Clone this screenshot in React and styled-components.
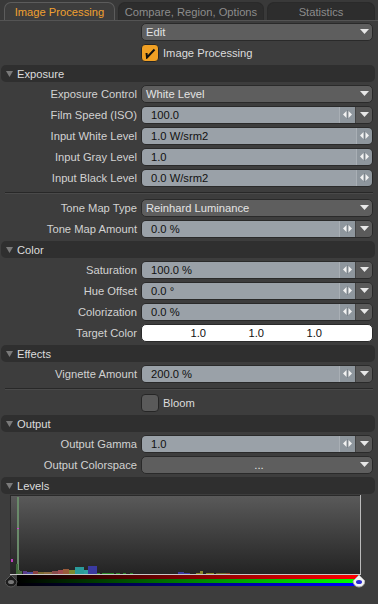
import React from 'react';
import styled, { createGlobalStyle } from 'styled-components';

const Global = createGlobalStyle`
  html, body {
    margin: 0;
    padding: 0;
    background: #3d3d3d;
  }
  body {
    font-family: "Liberation Sans", Arial, sans-serif;
    font-size: 11px;
    color: #d4d4d4;
  }
`;

const Panel = styled.div`
  width: 378px;
  height: 604px;
  overflow: hidden;
  background: #3d3d3d;
`;

const TabBar = styled.div`
  display: flex;
  align-items: flex-end;
  height: 20px;
  padding: 0 3px 0 4px;
  gap: 3px;
  border-bottom: 1px solid #545454;
  background: #393939;
`;

const Tab = styled.div`
  flex: ${(p) => p.$grow};
  height: 17px;
  display: flex;
  align-items: center;
  justify-content: center;
  border-radius: 7px 7px 0 0;
  font-size: 11.2px;
  color: ${(p) => (p.$active ? '#f0a030' : '#8c8c8c')};
  background: ${(p) => (p.$active ? '#3d3d3d' : '#2d2d2d')};
  border: 1px solid ${(p) => (p.$active ? '#5c5c5c' : '#2a2a2a')};
  border-bottom: none;
`;

const Row = styled.div`
  display: flex;
  align-items: center;
  height: 21px;
  padding-right: 5px;
`;

const Label = styled.div`
  width: 137px;
  flex: none;
  padding-right: 4px;
  box-sizing: content-box;
  text-align: right;
  white-space: nowrap;
  color: #d2d2d2;
  font-size: 11.2px;
`;

const Header = styled.div`
  height: 20px;
  display: flex;
  align-items: flex-start;
  padding: 2px 3px 0 1px;
  box-sizing: border-box;
`;

const HeaderBar = styled.div`
  flex: 1;
  height: 17px;
  display: flex;
  align-items: center;
  gap: 4px;
  padding-left: 5px;
  border-radius: 5px;
  background: #2f2f2f;
  color: #dcdcdc;
  font-size: 11.2px;
`;

const Separator = styled.div`
  height: ${(p) => p.$h}px;
  display: flex;
  align-items: center;
  padding: 0 5px;
  &::after {
    content: '';
    flex: 1;
    height: 1px;
    background: #282828;
    box-shadow: 0 1px 0 #4a4a4a;
  }
`;

const Dropdown = styled.div`
  flex: 1;
  height: 16px;
  display: flex;
  align-items: center;
  justify-content: ${(p) => (p.$center ? 'center' : 'space-between')};
  position: relative;
  padding-left: 4px;
  border: 1px solid #2a2a2a;
  border-radius: 5px;
  background: #5e5e5e;
  color: #e4e4e4;
  font-size: 11.2px;
`;

const DropArrow = styled.span`
  display: flex;
  align-items: center;
  justify-content: center;
  width: 16px;
  height: 100%;
  ${(p) => p.$float && 'position: absolute; right: 0; top: 0;'}
`;

const NumField = styled.div`
  flex: 1;
  height: 16px;
  display: flex;
  border: 1px solid #2a2a2a;
  border-radius: 5px;
  overflow: hidden;
`;

const Value = styled.div`
  flex: 1;
  display: flex;
  align-items: center;
  padding-left: 9px;
  background: #9aa1a8;
  color: #111;
  font-size: 11.2px;
`;

const Spin = styled.div`
  width: 15px;
  flex: none;
  display: flex;
  align-items: center;
  justify-content: center;
  background: #8e969d;
  border-left: 1px solid #a9afb5;
`;

const ArrowCell = styled.div`
  width: 16px;
  flex: none;
  display: flex;
  align-items: center;
  justify-content: center;
  background: #5a5a5a;
  border-left: 1px solid #444;
`;

const ColorField = styled.div`
  flex: 1;
  height: 16px;
  display: grid;
  grid-template-columns: 64px 58px 58px 1fr;
  align-items: center;
  border: 1px solid #2a2a2a;
  border-radius: 5px;
  background: #ffffff;
  color: #111;
  font-size: 11.2px;
`;

const ColorCell = styled.span`
  text-align: right;
`;

const Check = styled.div`
  width: 16px;
  height: 16px;
  flex: none;
  display: flex;
  align-items: center;
  justify-content: center;
  border: 1px solid #262626;
  border-radius: 4px;
  background: ${(p) => (p.$on ? '#f0a024' : '#5a5a5a')};
`;

const CheckLabel = styled.span`
  margin-left: 4px;
  color: #dcdcdc;
  font-size: 11.2px;
`;

const LevelsBox = styled.div`
  padding: 0 0 0 5px;
`;

const Arrow = () => (
  <svg width="9" height="5" viewBox="0 0 9 5">
    <path d="M0 0H9L4.5 5Z" fill="#e8e8e8" />
  </svg>
);

const SpinIcon = () => (
  <svg width="9" height="9" viewBox="0 0 9 9">
    <path d="M3.5 1L0 4.5 3.5 8Z" fill="#f2f2f2" />
    <path d="M5.5 1L9 4.5 5.5 8Z" fill="#f2f2f2" />
    <rect x="4" y="0" width="1" height="9" fill="#7c848b" />
  </svg>
);

const Tri = () => (
  <svg width="7" height="6" viewBox="0 0 7 6">
    <path d="M0 0H7L3.5 6Z" fill="#7a7a7a" />
  </svg>
);

const Tick = () => (
  <svg width="12" height="12" viewBox="0 0 12 12">
    <path d="M2.5 6L3 10.5 10.5 2.5" stroke="#111" strokeWidth="2" fill="none" />
  </svg>
);

const Section = ({ title }) => (
  <Header>
    <HeaderBar>
      <Tri />
      {title}
    </HeaderBar>
  </Header>
);

const DropRow = ({ label, value, center }) => (
  <Row>
    <Label>{label}</Label>
    <Dropdown $center={center}>
      {value}
      <DropArrow $float={center}>
        <Arrow />
      </DropArrow>
    </Dropdown>
  </Row>
);

const NumRow = ({ label, value, arrow = true }) => (
  <Row>
    <Label>{label}</Label>
    <NumField>
      <Value>{value}</Value>
      <Spin>
        <SpinIcon />
      </Spin>
      {arrow && (
        <ArrowCell>
          <Arrow />
        </ArrowCell>
      )}
    </NumField>
  </Row>
);

const CheckRow = ({ label, on }) => (
  <Row>
    <Label />
    <Check $on={on}>{on && <Tick />}</Check>
    <CheckLabel>{label}</CheckLabel>
  </Row>
);

// [x, width, height, colour] in histogram pixels
const bars = [
  [6, 2, 10, '#3f6a3a'], [8, 2, 4, '#4a6a3a'], [10, 2, 3, '#4a6e44'],
  [13, 4, 3, '#5a3a8a'], [17, 6, 2, '#4a4aa0'], [23, 5, 3, '#8a4040'],
  [28, 6, 2, '#7a6a30'], [34, 8, 2, '#8a6a40'], [42, 6, 3, '#8a4a4a'],
  [48, 5, 4, '#a04a50'], [53, 6, 5, '#9a5a3a'], [59, 6, 4, '#7a8a30'],
  [65, 9, 7, '#2a9a9a'], [74, 7, 4, '#30a0a0'], [78, 9, 8, '#3a3aa0'],
  [87, 3, 1, '#3a8a3a'], [92, 12, 1, '#2a8a2a'], [106, 4, 1, '#2a8a2a'],
  [113, 3, 1, '#2a8a2a'], [120, 3, 1, '#2a8a2a'], [168, 6, 2, '#3a3aa0'],
  [174, 6, 1, '#3a3aa0'], [186, 6, 1, '#8a8a2a'], [190, 3, 3, '#8a8a2a'],
  [196, 8, 1, '#8a8a2a'], [206, 10, 1, '#6a6a2a'], [216, 4, 1, '#8a4a2a'],
];

const Histogram = () => (
  <svg width="360" height="98" viewBox="0 0 360 98">
    <defs>
      <linearGradient id="bg" x1="0" y1="0" x2="0" y2="1">
        <stop offset="0" stopColor="#5a5a5a" />
        <stop offset="1" stopColor="#232323" />
      </linearGradient>
      <linearGradient id="r" x1="0" y1="0" x2="1" y2="0">
        <stop offset="0" stopColor="#000" />
        <stop offset="1" stopColor="#ff0000" />
      </linearGradient>
      <linearGradient id="g" x1="0" y1="0" x2="1" y2="0">
        <stop offset="0" stopColor="#000" />
        <stop offset="1" stopColor="#00ff00" />
      </linearGradient>
      <linearGradient id="b" x1="0" y1="0" x2="1" y2="0">
        <stop offset="0" stopColor="#000" />
        <stop offset="1" stopColor="#0000ff" />
      </linearGradient>
    </defs>
    <rect x="5.5" y="0.5" width="350" height="79" fill="url(#bg)" stroke="#2a2a2a" />
    <line x1="355.5" y1="0" x2="355.5" y2="80" stroke="#bbbbbb" />
    <rect x="12" y="2" width="2" height="77" fill="#6a8a6a" />
    <rect x="12" y="33" width="2" height="1" fill="#d040d0" />
    <rect x="6" y="64" width="2" height="3" fill="#c040c0" />
    {bars.map(([x, w, h, c], i) => (
      <rect key={i} x={5 + x} y={79 - h} width={w} height={h} fill={c} />
    ))}
    <rect x="5" y="79" width="351" height="1" fill="#c8c8c8" />
    <rect x="12" y="80" width="342" height="4" fill="url(#r)" />
    <rect x="12" y="84" width="342" height="4" fill="url(#g)" />
    <rect x="12" y="88" width="342" height="3" fill="url(#b)" />
    <path d="M0 86L6 80 12 86A6 6 0 1 1 0 86Z" fill="#1e1e1e" stroke="#5a5a5a" />
    <ellipse cx="6" cy="87" rx="3" ry="2" fill="#777" />
    <path d="M348 86L354 80 360 86A6 6 0 1 1 348 86Z" fill="#f2f2f2" stroke="#aaa" />
    <ellipse cx="354" cy="87" rx="3" ry="2" fill="#2a2ad0" />
  </svg>
);

export default function App() {
  return (
    <Panel>
      <Global />
      <TabBar>
        <Tab $active $grow="111">Image Processing</Tab>
        <Tab $grow="147">Compare, Region, Options</Tab>
        <Tab $grow="108">Statistics</Tab>
      </TabBar>
      <DropRow label="" value="Edit" />
      <CheckRow label="Image Processing" on />
      <Section title="Exposure" />
      <DropRow label="Exposure Control" value="White Level" />
      <NumRow label="Film Speed (ISO)" value="100.0" />
      <NumRow label="Input White Level" value="1.0 W/srm2" arrow={false} />
      <NumRow label="Input Gray Level" value="1.0" arrow={false} />
      <NumRow label="Input Black Level" value="0.0 W/srm2" arrow={false} />
      <Separator $h={9} />
      <DropRow label="Tone Map Type" value="Reinhard Luminance" />
      <NumRow label="Tone Map Amount" value="0.0 %" />
      <Section title="Color" />
      <NumRow label="Saturation" value="100.0 %" />
      <NumRow label="Hue Offset" value="0.0 °" />
      <NumRow label="Colorization" value="0.0 %" />
      <Row>
        <Label>Target Color</Label>
        <ColorField>
          <ColorCell>1.0</ColorCell>
          <ColorCell>1.0</ColorCell>
          <ColorCell>1.0</ColorCell>
        </ColorField>
      </Row>
      <Section title="Effects" />
      <NumRow label="Vignette Amount" value="200.0 %" />
      <Separator $h={8} />
      <CheckRow label="Bloom" />
      <Section title="Output" />
      <NumRow label="Output Gamma" value="1.0" />
      <DropRow label="Output Colorspace" value="..." center />
      <Section title="Levels" />
      <LevelsBox>
        <Histogram />
      </LevelsBox>
    </Panel>
  );
}
